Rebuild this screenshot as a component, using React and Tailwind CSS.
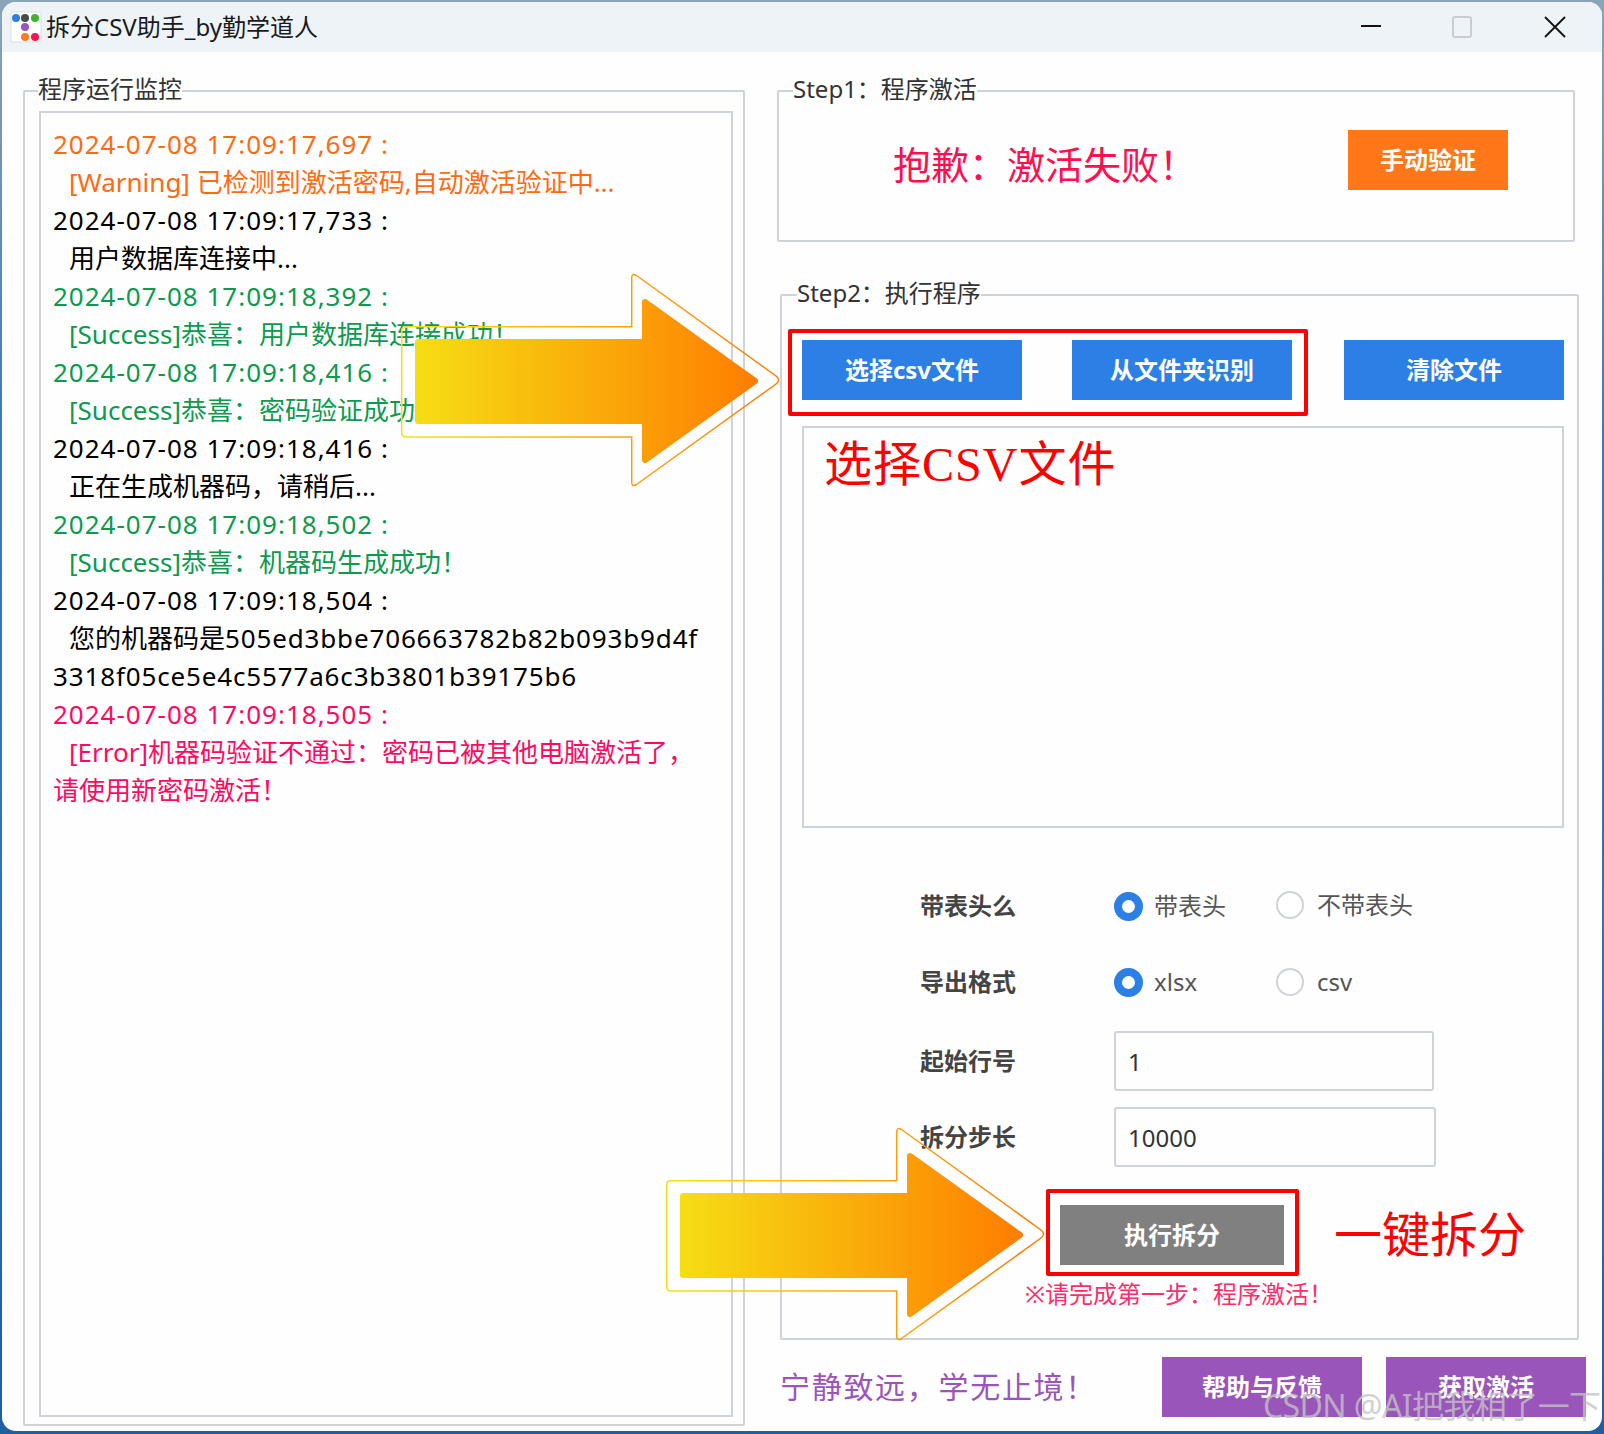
import React from "react";

const LOG = [
  ["o", 0, "2024-07-08 17:09:17,697 :"],
  ["o", 1, "[Warning] 已检测到激活密码,自动激活验证中..."],
  ["k", 0, "2024-07-08 17:09:17,733 :"],
  ["k", 1, "用户数据库连接中..."],
  ["g", 0, "2024-07-08 17:09:18,392 :"],
  ["g", 1, "[Success]恭喜：用户数据库连接成功！"],
  ["g", 0, "2024-07-08 17:09:18,416 :"],
  ["g", 1, "[Success]恭喜：密码验证成功！"],
  ["k", 0, "2024-07-08 17:09:18,416 :"],
  ["k", 1, "正在生成机器码，请稍后..."],
  ["g", 0, "2024-07-08 17:09:18,502 :"],
  ["g", 1, "[Success]恭喜：机器码生成成功！"],
  ["k", 0, "2024-07-08 17:09:18,504 :"],
  ["k", 1, "您的机器码是", "505ed3bbe706663782b82b093b9d4f"],
  ["k", 0, "", "3318f05ce5e4c5577a6c3b3801b39175b6"],
  ["r", 0, "2024-07-08 17:09:18,505 :"],
  ["r", 1, "[Error]机器码验证不通过：密码已被其他电脑激活了，"],
  ["r", 0, "请使用新密码激活！"],
];
const COLOR = { o: "text-[#ff6a13]", k: "text-[#000000]", g: "text-[#0c9a4f]", r: "text-[#ff0a62]" };

function Arrow({ id, className }) {
  const outer =
    "M8 56.7L233.7 56.7L233.7 8Q233.7 2.5 238.5 5.5L378 106Q383 110 378 114L238.5 214.5Q233.7 217.5 233.7 212L233.7 167L8 167Q3.7 167 3.7 162.7L3.7 61Q3.7 56.7 8 56.7Z";
  const inner = "20,72 247,72 247,32 357,111 247,190 247,151 20,151";
  return (
    <svg className={className} width="386" height="222" viewBox="0 0 386 222">
      <defs>
        <linearGradient id={id} gradientUnits="userSpaceOnUse" x1="17" y1="0" x2="360" y2="0">
          <stop offset="0" stopColor="#f5de14" />
          <stop offset="1" stopColor="#ff7d00" />
        </linearGradient>
      </defs>
      <path d={outer} fill="none" stroke={`url(#${id})`} strokeWidth="1.5" />
      <polygon points={inner} fill={`url(#${id})`} stroke={`url(#${id})`} strokeWidth="6" strokeLinejoin="round" />
    </svg>
  );
}

function Group({ title, className, titleClass, children }) {
  return (
    <div className={`relative border-2 border-[#cdd3d9] rounded-[2px] ${className}`}>
      <span className={`absolute -top-[19px] bg-[#fefefe] text-[24px] leading-[32px] text-[#333333] ${titleClass}`}>{title}</span>
      {children}
    </div>
  );
}

function Btn({ className, children }) {
  return (
    <button className={`flex items-center justify-center h-[60px] text-[24px] font-bold text-white ${className}`}>{children}</button>
  );
}

function Radio({ on, label, className }) {
  return (
    <span className={`flex items-center ${on ? "gap-[11px]" : "gap-[13px]"} ${className}`}>
      {on ? (
        <span className="block w-[29px] h-[29px] rounded-full border-[8px] border-[#2b7fe5] bg-white" />
      ) : (
        <span className="block w-[28px] h-[28px] rounded-full border-2 border-[#cfd3d8] bg-white" />
      )}
      <span className="text-[24px] leading-[32px] text-[#555555]">{label}</span>
    </span>
  );
}

function Row({ label, children, className }) {
  return (
    <div className={`flex items-center pl-[138px] ${className}`}>
      <span className="w-[194px] text-[24px] leading-[32px] font-bold text-[#444444]">{label}</span>
      {children}
    </div>
  );
}

function Field({ value, className }) {
  return (
    <input
      readOnly
      value={value}
      className={`h-full border-2 border-[#cdd3d9] rounded-[3px] pl-[12px] text-[24px] text-[#333333] bg-[#fefefe] outline-none ${className}`}
    />
  );
}

export default function App() {
  return (
    <div className="relative w-[1604px] h-[1434px] overflow-hidden bg-[linear-gradient(180deg,#8aa5b8_0%,#3f78b8_30%,#2f6fb5_70%,#1f5f9f_100%)] font-['Noto_Sans','Noto_Sans_CJK_SC',sans-serif] pt-[2px] px-[2px] pb-[3px]">
      <div className="w-full h-full rounded-[14px] overflow-hidden bg-[#fefefe] flex flex-col">
        <div className="h-[50px] shrink-0 bg-[#eef3f8] flex items-center">
          <svg className="ml-[8px] shrink-0" width="32" height="32" viewBox="0 0 32 32">
            <rect x="1" y="1" width="30" height="30" rx="1" fill="#ffffff" stroke="#d9dde0" />
            <circle cx="6" cy="7" r="4" fill="#2b7fe5" />
            <circle cx="15" cy="7" r="4" fill="#4a4a4a" />
            <circle cx="25" cy="7" r="4" fill="#3fb52f" />
            <circle cx="15" cy="16" r="4" fill="#9a55bb" />
            <circle cx="15" cy="26" r="4" fill="#ff7a1a" />
            <circle cx="25" cy="26" r="4" fill="#f5154f" />
          </svg>
          <span className="ml-[4px] text-[24px] leading-[32px] text-[#1a1a1a]">拆分CSV助手_by勤学道人</span>
          <div className="ml-auto flex items-center mr-[36px]">
            <svg width="22" height="22" viewBox="0 0 22 22"><path d="M1 10h20" stroke="#111111" strokeWidth="2.2" /></svg>
            <svg className="ml-[70px]" width="20" height="22" viewBox="0 0 20 22"><rect x="1" y="1" width="18" height="20" rx="2" fill="none" stroke="#c9cdd1" strokeWidth="2" /></svg>
            <svg className="ml-[72px]" width="22" height="22" viewBox="0 0 22 22"><path d="M1 1l20 20M21 1L1 21" stroke="#111111" strokeWidth="1.8" /></svg>
          </div>
        </div>

        <div className="flex-1 flex items-start pl-[21px] pt-[38px]">
          <Group title="程序运行监控" className="w-[722px] h-[1336px] pl-[14px] pt-[19px]" titleClass="left-[13px]">
            <div className="w-[694px] h-[1306px] border-2 border-[#cdd3d9] pl-[12px] pt-[12px]">
              {LOG.map(([c, ind, t, hex], i) => (
                <div key={i} className={`text-[26px] leading-[38px] whitespace-nowrap ${COLOR[c]} ${ind ? "pl-[16px]" : ""} ${/^\d{4}-/.test(t) ? "tracking-[1px]" : ""}`}>
                  {t}
                  {hex ? <span className="tracking-[0.85px]">{hex}</span> : null}
                </div>
              ))}
            </div>
          </Group>

          <div className="ml-[32px] w-[810px] flex flex-col">
            <Group title="Step1：程序激活" className="w-[798px] h-[152px]" titleClass="left-[14px]">
              <div className="flex items-center h-[60px] mt-[38px]">
                <span className="ml-[114px] mt-[8px] w-[455px] text-[38px] leading-[60px] text-[#ff0f4f]">抱歉：激活失败！</span>
                <Btn className="w-[160px] bg-[#ff7718]">手动验证</Btn>
              </div>
            </Group>

            <Group title="Step2：执行程序" className="ml-[3px] mt-[52px] w-[799px] h-[1046px] pt-[44px]" titleClass="left-[15px]">
              <div className="flex pl-[20px]">
                <Btn className="w-[220px] bg-[#2b7fe5]">选择csv文件</Btn>
                <Btn className="ml-[50px] w-[220px] bg-[#2b7fe5]">从文件夹识别</Btn>
                <Btn className="ml-[52px] w-[220px] bg-[#2b7fe5]">清除文件</Btn>
              </div>
              <div className="ml-[20px] mt-[26px] w-[762px] h-[402px] border-2 border-[#cdd3d9]" />
              <Row label="带表头么" className="mt-[58px] h-[40px]">
                <Radio on label="带表头" className="w-[162px]" />
                <Radio label="不带表头" className="-mt-[3px]" />
              </Row>
              <Row label="导出格式" className="mt-[36px] h-[40px]">
                <Radio on label="xlsx" className="w-[162px]" />
                <Radio label="csv" className="" />
              </Row>
              <Row label="起始行号" className="mt-[29px] h-[60px]">
                <Field value="1" className="w-[320px]" />
              </Row>
              <Row label="拆分步长" className="mt-[16px] h-[60px]">
                <Field value="10000" className="w-[322px]" />
              </Row>
              <Btn className="ml-[278px] mt-[38px] w-[224px] bg-[#808080]">执行拆分</Btn>
              <div className="ml-[243px] mt-[13px] text-[24px] leading-[32px] whitespace-nowrap text-[#ff2d6a]">※请完成第一步：程序激活！</div>
            </Group>

            <div className="flex items-center ml-[3px] mt-[17px]">
              <span className="w-[382px] text-[30px] leading-[60px] tracking-[1.7px] text-[#9a55bb]">宁静致远，学无止境！</span>
              <Btn className="w-[200px] bg-[#9a55bb]">帮助与反馈</Btn>
              <Btn className="ml-[24px] w-[200px] bg-[#9a55bb]">获取激活</Btn>
            </div>
          </div>
        </div>
      </div>

      <Arrow id="a1" className="absolute left-[398px] top-[270px]" />
      <Arrow id="a2" className="absolute left-[663px] top-[1124px]" />

      <div className="absolute left-[788px] top-[329px] w-[520px] h-[87px] border-4 border-[#ff0000] rounded-[2px]" />
      <div className="absolute left-[1046px] top-[1189px] w-[253px] h-[87px] border-4 border-[#ff0000] rounded-[2px]" />

      <span className="absolute left-[824px] top-[435px] text-[48px] leading-[60px] tracking-[1px] text-[#ff0000] font-['Liberation_Serif','Noto_Sans_CJK_SC',serif]">选择CSV文件</span>
      <span className="absolute left-[1334px] top-[1206px] text-[48px] leading-[60px] text-[#ff0000] font-['Liberation_Serif','Noto_Sans_CJK_SC',serif]">一键拆分</span>
      <span className="absolute left-[1263px] top-[1386px] text-[32px] leading-[40px] tracking-[-0.6px] whitespace-nowrap text-[#c4c4c4]/80">CSDN @AI把我相了一下</span>
    </div>
  );
}
